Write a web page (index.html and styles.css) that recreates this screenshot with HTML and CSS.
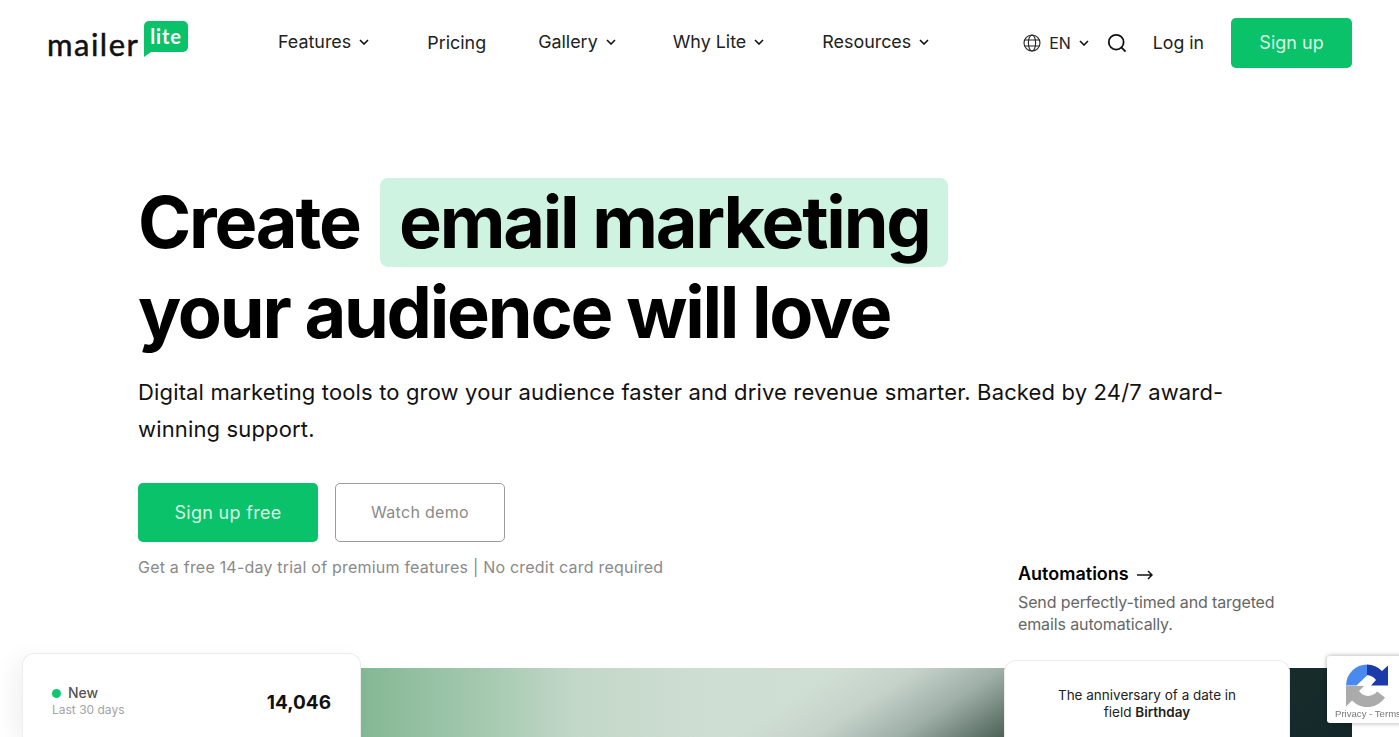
FILE: index.html
```html
<!DOCTYPE html>
<html lang="en">
<head>
<meta charset="UTF-8">
<meta name="viewport" content="width=device-width, initial-scale=1.0">
<title>MailerLite</title>
<link rel="stylesheet" href="styles.css">
</head>
<body>

<!-- Header -->
<header class="header">
    <a class="logo" href="#">
        <span class="logo-word">mailer</span>
        <span class="logo-bubble">lite</span>
    </a>
    <nav class="nav">
        <a class="nav-item nav-features" href="#">Features <svg class="chev" viewBox="0 0 10 6"><path d="M1 1l4 4 4-4"/></svg></a>
        <a class="nav-item nav-pricing" href="#">Pricing</a>
        <a class="nav-item nav-gallery" href="#">Gallery <svg class="chev" viewBox="0 0 10 6"><path d="M1 1l4 4 4-4"/></svg></a>
        <a class="nav-item nav-why" href="#">Why Lite <svg class="chev" viewBox="0 0 10 6"><path d="M1 1l4 4 4-4"/></svg></a>
        <a class="nav-item" href="#">Resources <svg class="chev" viewBox="0 0 10 6"><path d="M1 1l4 4 4-4"/></svg></a>
    </nav>
    <div class="header-right">
        <a class="lang" href="#">
            <svg class="globe" viewBox="0 0 18 18"><circle cx="9" cy="9" r="8"/><ellipse cx="9" cy="9" rx="3.6" ry="8"/><path d="M1.6 6h14.8M1.6 12h14.8"/></svg>
            EN
            <svg class="chev" viewBox="0 0 10 6"><path d="M1 1l4 4 4-4"/></svg>
        </a>
        <svg class="search" viewBox="0 0 20 20"><circle cx="9.2" cy="9.2" r="7.4"/><path d="M14.6 14.6l4 4"/></svg>
        <a class="login" href="#">Log in</a>
        <a class="btn-signup" href="#">Sign up</a>
    </div>
</header>

<!-- Hero -->
<section class="hero">
    <h1 class="hero-title">
        <span class="title-line">Create <span class="mark">email marketing</span></span>
        <span class="title-line">your audience will love</span>
    </h1>
    <p class="hero-sub">Digital marketing tools to grow your audience faster and drive revenue smarter. Backed by 24/7 award-winning support.</p>
    <div class="hero-buttons">
        <a class="btn-primary" href="#">Sign up free</a>
        <a class="btn-outline" href="#">Watch demo</a>
    </div>
    <p class="hero-note">Get a free 14-day trial of premium features | No credit card required</p>
</section>

<!-- Banda con la imagen y las tarjetas -->
<section class="showcase">
    <div class="feature-text">
        <h3 class="feature-title">Automations <svg class="arrow" viewBox="0 0 16 10"><path d="M0 5h14.5M11 1l4 4-4 4"/></svg></h3>
        <p class="feature-desc">Send perfectly-timed and targeted emails automatically.</p>
    </div>
    <div class="band"></div>
    <div class="card card-stats">
        <div class="stat-label">
            <div class="stat-new"><span class="dot"></span>New</div>
            <div class="stat-period">Last 30 days</div>
        </div>
        <div class="stat-value">14,046</div>
    </div>
    <div class="card card-trigger">The anniversary of a date in<br>field <b>Birthday</b></div>
</section>

<!-- reCAPTCHA -->
<div class="recaptcha">
    <svg class="recaptcha-icon" viewBox="0 0 42 42">
        <path fill="#4a8af0" d="M21 0A21 21 0 0 0 0 21H10.5L21 11Z"/>
        <path fill="#1c3aa9" d="M21 0A21 21 0 0 1 36 6.5L42 1V21H25L30 15.5A12 12 0 0 0 21 10.5Z"/>
        <path fill="#ababab" d="M0 21.5H18L13 26.5A11 11 0 0 0 31 27L39 33A21 21 0 0 1 6 36L0 42Z"/>
    </svg>
    <div class="recaptcha-links">Privacy - Terms</div>
</div>

</body>
</html>
```

FILE: styles.css
```css
* {
    box-sizing: border-box;
}

html, body {
    height: 737px;
    overflow: hidden;
}

body {
    margin: 0;
    background-color: #fff;
    color: #000;
    font-family: "Inter", sans-serif;
}

a {
    color: inherit;
    text-decoration: none;
}

/* Header */
.header {
    display: flex;
    align-items: center;
    height: 85px;
    padding: 0 47px 0 48px;
}

.logo {
    position: relative;
    display: block;
    width: 140px;
    height: 36px;
    margin-top: -7px;
}

.logo-word {
    position: absolute;
    left: -1px;
    bottom: -3px;
    font-family: "Lato", sans-serif;
    font-size: 31px;
    line-height: 32px;
    letter-spacing: 1.5px;
    color: #111;
    -webkit-text-stroke: 0.5px #111;
}

.logo-bubble {
    position: absolute;
    top: 0;
    right: 0;
    width: 44px;
    height: 31px;
    background-color: #09c269;
    border-radius: 5px 5px 5px 0;
    color: #fff;
    font-family: "Lato", sans-serif;
    font-size: 20px;
    font-weight: 700;
    line-height: 30px;
    letter-spacing: 0.8px;
    text-align: center;
}

.logo-bubble::after {
    content: "";
    position: absolute;
    left: 0;
    bottom: -5px;
    border-top: 5px solid #09c269;
    border-right: 7px solid transparent;
}

.nav {
    display: flex;
    align-items: center;
    margin-left: 90px;
    margin-top: -2px;
    font-size: 17.9px;
    color: #222;
}

.nav-item {
    display: flex;
    align-items: center;
    white-space: nowrap;
}

.nav-features { margin-right: 58px; }
.nav-pricing { margin-right: 52px; margin-top: 2px; }
.nav-gallery { margin-right: 57px; }
.nav-why { margin-right: 58px; }

.chev {
    width: 10px;
    height: 6px;
    margin-left: 8px;
    fill: none;
    stroke: #111;
    stroke-width: 1.6;
}

.header-right {
    display: flex;
    align-items: center;
    margin-left: auto;
    color: #222;
}

.lang {
    display: flex;
    align-items: center;
    font-size: 16px;
}

.globe {
    width: 18px;
    height: 18px;
    margin-right: 8px;
    fill: none;
    stroke: #222;
    stroke-width: 1.1;
}

.search {
    width: 20px;
    height: 20px;
    margin-left: 18px;
    fill: none;
    stroke: #111;
    stroke-width: 1.8;
}

.login {
    margin-left: 26px;
    font-size: 17.7px;
}

.btn-signup {
    width: 121px;
    height: 50px;
    margin-left: 27px;
    background-color: #09c269;
    border-radius: 5px;
    color: #d6f5e5;
    font-size: 18px;
    line-height: 50px;
    text-align: center;
}

/* Hero */
.hero {
    padding: 92px 0 0 138px;
}

.hero-title {
    margin: 0;
    font-size: 72px;
    font-weight: 750;
    line-height: 90px;
    letter-spacing: -2.2px;
}

.title-line {
    display: block;
    height: 90px;
    white-space: nowrap;
}

.mark {
    display: inline-block;
    margin-left: 5.5px;
    padding: 0 18px 0 19px;
    height: 89px;
    line-height: 88px;
    background-color: #cff3e1;
    border-radius: 8px;
}

.hero-sub {
    width: 1100px;
    margin: 17px 0 0;
    font-size: 22px;
    line-height: 37px;
    letter-spacing: 0.15px;
    color: #111;
}

.hero-buttons {
    display: flex;
    gap: 17px;
    margin-top: 35px;
}

.btn-primary, .btn-outline {
    display: block;
    height: 59px;
    border-radius: 5px;
    line-height: 57px;
    text-align: center;
}

.btn-primary {
    width: 180px;
    background-color: #09c269;
    color: #d6f5e5;
    font-size: 18px;
    line-height: 59px;
    letter-spacing: 0.3px;
}

.btn-outline {
    width: 170px;
    border: 1px solid #9a9a9a;
    color: #8a8a8a;
    font-size: 16px;
    letter-spacing: 0.3px;
}

.hero-note {
    margin: 14px 0 0;
    font-size: 16px;
    line-height: 22px;
    letter-spacing: 0.21px;
    color: #8a8a8a;
}

/* Showcase */
.showcase {
    position: relative;
    height: 159px;
}

.feature-text {
    position: absolute;
    top: -16px;
    left: 1018px;
    width: 290px;
}

.feature-title {
    margin: 0;
    font-size: 18px;
    font-weight: 600;
    line-height: 24px;
}

.arrow {
    width: 16px;
    height: 10px;
    margin-left: 4px;
    fill: none;
    stroke: #111;
    stroke-width: 1.5;
}

.feature-desc {
    margin: 5px 0 0;
    font-size: 16px;
    line-height: 22px;
    letter-spacing: -0.12px;
    color: #666;
}

.band {
    position: absolute;
    top: 90px;
    left: 360px;
    width: 992px;
    height: 69px;
    background:
        linear-gradient(147deg, rgba(207, 220, 211, 0) 44%, rgba(192, 205, 197, 0.7) 51%, #9fb0a8 58.6%, #4d6157 68.3%, #1a2e2c 76%, #14282a 100%),
        linear-gradient(90deg, #84b894 0%, #a3c8ae 12%, #c3d8c9 22%, #cfded3 36%, #d0dcd3 100%);
}

.card {
    position: absolute;
    background-color: #fff;
    border: 1px solid #ececec;
    border-bottom: none;
    border-radius: 12px 12px 0 0;
}

.card-stats {
    top: 75px;
    left: 22px;
    width: 339px;
    height: 84px;
    box-shadow: -8px 6px 24px rgba(0, 0, 0, 0.06);
}

.stat-label {
    position: absolute;
    top: 30px;
    left: 29px;
}

.stat-new {
    display: flex;
    align-items: center;
    font-size: 14px;
    line-height: 18px;
    font-weight: 500;
    color: #555;
}

.dot {
    width: 9px;
    height: 9px;
    margin-right: 7px;
    border-radius: 50%;
    background-color: #0fc76f;
}

.stat-period {
    font-size: 12px;
    line-height: 16px;
    color: #a3a3a3;
}

.stat-value {
    position: absolute;
    top: 36px;
    right: 29px;
    font-size: 19px;
    font-weight: 700;
    line-height: 26px;
    color: #111;
}

.card-trigger {
    top: 82px;
    left: 1004px;
    width: 286px;
    height: 77px;
    padding-top: 26px;
    font-size: 13.5px;
    line-height: 17px;
    text-align: center;
    color: #222;
}

.card-trigger b {
    font-weight: 600;
}

.recaptcha {
    position: fixed;
    top: 656px;
    left: 1327px;
    width: 90px;
    height: 67px;
    background-color: #fff;
    border-radius: 3px;
    box-shadow: 0 0 5px rgba(0, 0, 0, 0.35);
    overflow: hidden;
}

.recaptcha-icon {
    display: block;
    width: 42px;
    height: 43px;
    margin: 8px 0 0 19px;
}

.recaptcha-links {
    position: absolute;
    left: 8px;
    bottom: 2px;
    font-family: "Liberation Sans", sans-serif;
    font-size: 9.6px;
    line-height: 14px;
    white-space: nowrap;
    color: #777;
}
```
